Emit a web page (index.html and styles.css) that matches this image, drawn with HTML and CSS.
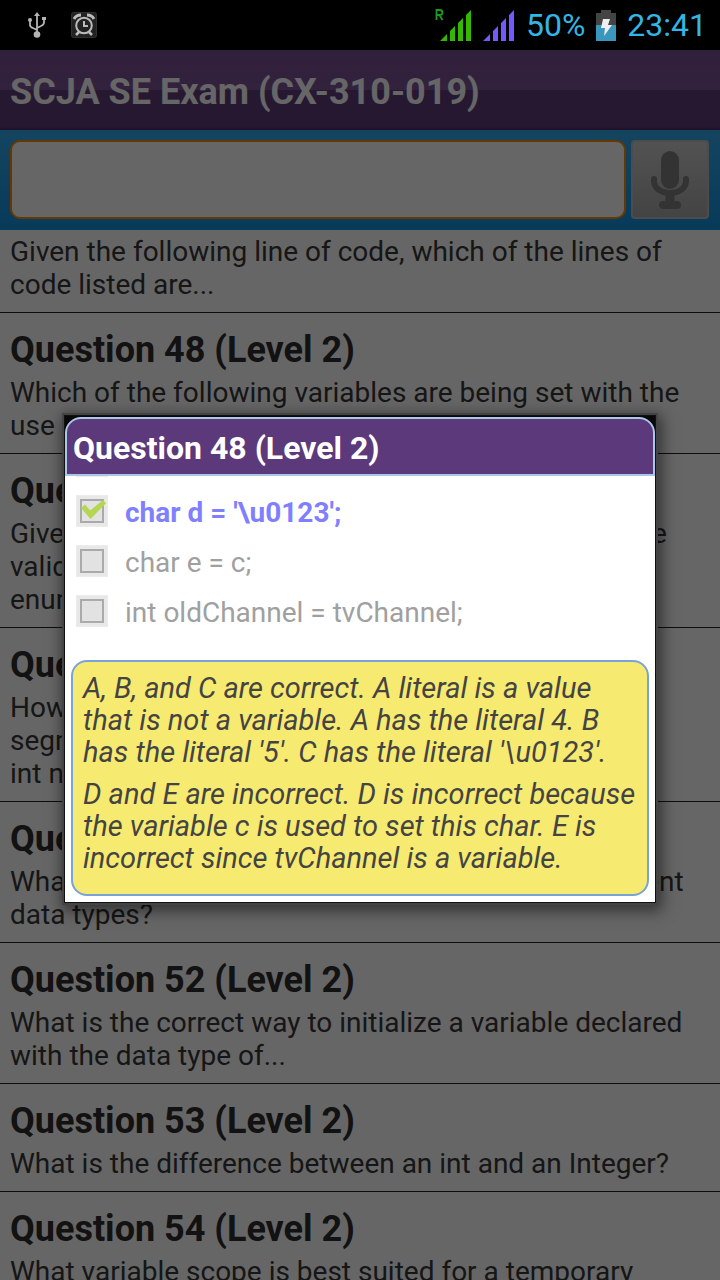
FILE: index.html
```html
<!DOCTYPE html>
<html lang="en">
<head>
<meta charset="utf-8">
<meta name="viewport" content="width=device-width, initial-scale=1">
<title>SCJA SE Exam</title>
<link rel="stylesheet" href="styles.css">
</head>
<body>
<div class="statusbar">
  <div class="notices">
    <svg width="20" height="28" viewBox="0 0 20 28" fill="none" stroke="#b4b4b4" stroke-width="1.8" aria-label="USB"><path d="M10 23V4M3 10v4q0 2 3 3l4 2M17 8v3q0 3-3 4l-4 2"/><path d="M7 5l3-4 3 4zM15 6h4v3h-4z" fill="#b4b4b4" stroke="none"/><circle cx="3" cy="9" r="2" fill="#b4b4b4" stroke="none"/><circle cx="10" cy="23.500" r="3.300" fill="#b4b4b4" stroke="none"/></svg>
    <svg width="26" height="26" viewBox="0 0 26 26" fill="none" stroke="#bbb" stroke-width="2" aria-label="Alarm"><rect x=".5" y=".5" width="25" height="25" rx="2" fill="#222" stroke="#303030" stroke-width="1"/><circle cx="13" cy="13.500" r="7.800"/><path d="M13 9v5h4"/><path d="M3 7q2-4 7-4M16 3q5 0 7 4" stroke-width="2.800"/><path d="M8 20l-3 3M18 20l3 3" stroke-width="2.600"/></svg>
  </div>
  <div class="indicators">
    <svg width="37" height="36" viewBox="0 0 37 36" fill="#35b800" aria-label="Roaming signal"><path d="M5 34l7-7v7zM15 34V24l5-5v15zM23 34V16l5-5v23zM31 34V8l5-5v31z"/><path d="M1.500 13V3h3q3 0 3 2.500T4.500 8H1.500M4.500 8l3 5" fill="none" stroke="#1f9a1f" stroke-width="1.800"/></svg>
    <svg width="32" height="36" viewBox="0 0 32 36" fill="#7359ff" aria-label="Signal"><path d="M0 34l7-7v7zM10 34V24l5-5v15zM18 34V16l5-5v23zM26 34V8l5-5v31z"/></svg>
    <span>50%</span>
    <svg width="20" height="31" viewBox="0 0 20 31" aria-label="Charging"><path d="M0 3h5V0h10v3h5v13H0z" fill="#444"/><path d="M0 15h20v16H0z" fill="#3996bd"/><path d="M7 9h7l-2 6h4L8 26l1-8H5z" fill="#eee"/></svg>
    <span>23:41</span>
  </div>
</div>
<div class="screen">
  <header class="titlebar"><h1>SCJA SE Exam (CX-310-019)</h1></header>
  <form class="search">
    <input class="search-box" type="text" aria-label="Search questions">
    <button class="mic" type="button" aria-label="Voice search">
      <svg width="40" height="60" viewBox="0 0 40 60" fill="none" stroke="#818181"><rect x="11" y="1" width="18" height="38" rx="9" fill="#818181" stroke="none"/><path d="M4 29v2c0 7 7 12 16 12s16-5 16-12v-2" stroke-width="6" stroke-linecap="round"/><path d="M20 43v10" stroke-width="9"/><path d="M13 55h14" stroke-width="8" stroke-linecap="round"/></svg>
    </button>
  </form>
  <main class="questions">
    <article class="question scrolled"><p>Given the following line of code, which of the lines of<br>code listed are...</p></article>
    <article class="question"><h2>Question 48 (Level 2)</h2><p>Which of the following variables are being set with the<br>use of a literal?</p></article>
    <article class="question"><h2>Question 49 (Level 2)</h2><p>Given the following enumerations, which of those are<br>valid uses<br>enum?</p></article>
    <article class="question"><h2>Question 50 (Level 2)</h2><p>How many<br>segment<br>int n...</p></article>
    <article class="question"><h2>Question 51 (Level 2)</h2><p>What is the best way to hold a larger group of different<br>data types?</p></article>
    <article class="question"><h2>Question 52 (Level 2)</h2><p>What is the correct way to initialize a variable declared<br>with the data type of...</p></article>
    <article class="question"><h2>Question 53 (Level 2)</h2><p>What is the difference between an int and an Integer?</p></article>
    <article class="question"><h2>Question 54 (Level 2)</h2><p>What variable scope is best suited for a temporary</p></article>
  </main>
  <div class="backdrop">
    <section class="dialog" role="dialog" aria-labelledby="dialog-title">
      <h2 class="dialog-title" id="dialog-title">Question 48 (Level 2)</h2>
      <div class="answers">
        <label class="answer correct"><input type="checkbox" checked><span>char d = '\u0123';</span></label>
        <label class="answer"><input type="checkbox"><span>char e = c;</span></label>
        <label class="answer"><input type="checkbox"><span>int oldChannel = tvChannel;</span></label>
      </div>
      <div class="explanation">
        <p>A, B, and C are correct. A literal is a value<br>that is not a variable. A has the literal 4. B<br>has the literal '5'. C has the literal '\u0123'.</p>
        <p>D and E are incorrect. D is incorrect because<br>the variable c is used to set this char. E is<br>incorrect since tvChannel is a variable.</p>
      </div>
    </section>
  </div>
</div>
</body>
</html>
```
FILE: styles.css
```css
* { box-sizing: border-box; }
body {
  margin: 0;
  height: 100vh;
  overflow: hidden;
  display: flex;
  flex-direction: column;
  background: #fff;
  font-family: Roboto, "Liberation Sans", sans-serif;
}
h1, h2, p { margin: 0; }
.statusbar {
  flex: none;
  height: 50px;
  padding: 0 13px 0 27px;
  display: flex;
  justify-content: space-between;
  align-items: center;
  background: #000;
  color: #33b5e5;
  font-size: 32px;
}
.notices { display: flex; align-items: center; gap: 24px; }
.indicators { display: flex; align-items: center; gap: 11px; line-height: 40px; }
.screen {
  position: relative;
  flex: 1;
  min-height: 0;
  overflow: hidden;
}
.titlebar {
  height: 80px;
  padding: 0 10px;
  display: flex;
  align-items: center;
  background: linear-gradient(#7b5095, #7f5599 50%, #613e7d 50%, #613e7d 94%, #4d2d68);
  color: #fff;
}
.titlebar h1 { font-size: 36px; line-height: 44px; padding-top: 4px; white-space: nowrap; }
.search {
  height: 100px;
  padding: 10px 11px 11px 10px;
  display: flex;
  gap: 5px;
  background: linear-gradient(#34aced, #1491e1);
}
.search-box {
  flex: 1;
  min-width: 0;
  padding: 0 12px;
  border: 2px solid #ff8c00;
  border-radius: 10px;
  background: #fff;
  font: 28px Roboto, sans-serif;
}
.mic {
  width: 78px;
  padding: 0;
  display: grid;
  place-items: center;
  border: 2px solid #bebebe;
  border-radius: 4px;
  background: linear-gradient(#cdcdcd, #a9a9a9);
}
.question {
  padding: 16px 10px 11px;
  border-bottom: 1px solid #222;
  color: #383838;
  white-space: nowrap;
}
.question.scrolled { padding-top: 5px; }
.question h2 { margin-bottom: 4px; font-size: 36px; line-height: 43px; color: #2d2d2d; }
.question p { font-size: 28px; line-height: 33px; }
.backdrop {
  position: absolute;
  inset: 0;
  padding: 0 64px 12px;
  display: flex;
  align-items: center;
  background: rgba(0, 0, 0, .6);
}
.dialog {
  width: 100%;
  padding-top: 1px;
  border: 1px solid #111;
  background: linear-gradient(#080808 30px, #fff 30px);
  box-shadow: 0 0 0 2px #444, 2px 4px 14px 4px rgba(0, 0, 0, .5);
}
.dialog-title {
  padding: 8px 6px 5px;
  border: 2px solid #a9c8e8;
  border-radius: 16px 16px 0 0;
  background: #5c397b;
  color: #fff;
  font-size: 32px;
  line-height: 42px;
}
.answers { padding: 0 11px 24px; display: grid; background: #fff; }
.answers::before {
  content: "";
  width: 32px;
  height: 1px;
  margin-bottom: 9px;
  background: #ececec;
}
.answer {
  height: 50px;
  display: flex;
  align-items: center;
  gap: 17px;
  color: #a0a0a0;
  font-size: 28px;
}
.answer span { padding-top: 2px; }
.answer input {
  appearance: none;
  flex: none;
  width: 32px;
  height: 32px;
  margin: 0;
  padding: 4px;
  border: 1px solid #ececec;
  background: #e2e2e2 content-box;
  box-shadow: inset 0 0 0 3px #e8e8e8, inset 0 0 0 5px #aaa;
}
.answer input:checked::before {
  content: "";
  display: block;
  width: 25px;
  height: 19px;
  background: #b4d650;
  clip-path: polygon(0 42%, 16% 24%, 37% 55%, 88% 0, 100% 17%, 38% 100%);
}
.correct { color: #8080ff; font-weight: bold; }
.explanation {
  margin: 0 6px 6px;
  padding: 10px 10px 20px;
  display: grid;
  gap: 10px;
  border: 2px solid #78a3d8;
  border-radius: 16px;
  background: #f7ea70;
  color: #444;
  font-size: 29px;
  font-style: italic;
  line-height: 32px;
  white-space: nowrap;
}
```
